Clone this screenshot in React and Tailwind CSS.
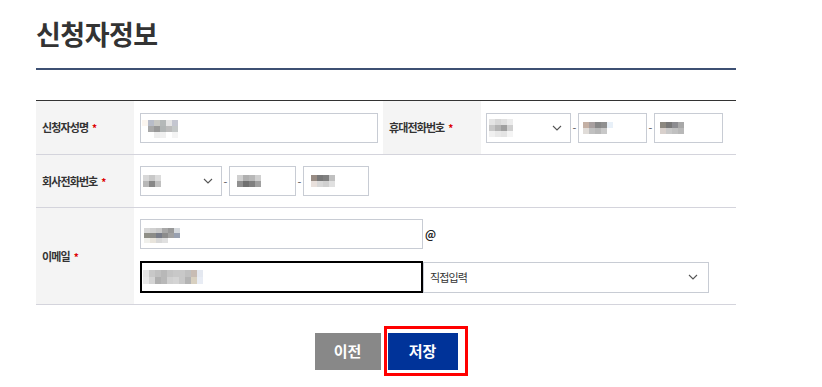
import React from "react";

const FONT = { fontFamily: '"Noto Sans CJK KR", "Noto Sans", sans-serif' };

function Mosaic({ rows, h = 6, w = 6 }) {
  return (
    <div className="flex flex-col">
      {rows.map((r, i) => (
        <div key={i} className="flex">
          {r.map((c, j) => (
            <div key={j} style={{ background: c, width: w, height: h }} />
          ))}
        </div>
      ))}
    </div>
  );
}

function Chevron() {
  return (
    <svg width="10" height="6" viewBox="0 0 10 6" className="shrink-0">
      <path d="M1 1 L5 5 L9 1" fill="none" stroke="#555" strokeWidth="1.1" />
    </svg>
  );
}

function Label({ children }) {
  return (
    <div className="w-[98px] shrink-0 bg-[#f4f4f4] flex items-center pl-[6px] text-[11px] font-bold text-[#333] tracking-[-0.9px]">
      {children}
      <span className="text-[#d00] ml-[4px] text-[10px]">*</span>
    </div>
  );
}

const Dash = () => <span className="text-[#555] text-[11px] w-[7px] text-center">-</span>;

export default function App() {
  return (
    <div style={FONT} className="w-[822px] h-[387px] bg-white pl-[36px] pt-[14px] relative">
      <div className="w-[700px]">
        <h1 className="text-[27px] font-bold text-[#333] leading-[40px] tracking-[-0.5px]">신청자정보</h1>
        <div className="mt-[14px] h-[2px] bg-[#3d5073]" />
        <div className="mt-[30px] border-t border-[#333]">
          {/* Row 1 */}
          <div className="flex h-[54px] border-b border-[#d4d4dc]">
            <Label>신청자성명</Label>
            <div className="w-[249px] flex items-center pl-[6px]">
              <div className="w-[238px] h-[30px] border border-[#c8ccd4] flex items-center pl-[1px] pt-[2px]">
                <Mosaic rows={[
                  ['#fbf5ef','#b8bcc8','#c8c8c4','#b4b8b8','#e4e4e4','#c4c6d0'],
                  ['#ffffff','#a8a8a8','#989898','#b0b4b4','#bcbcbc','#c4c8c8'],
                  ['#ffffff','#ffffff','#eeeeee','#f0f0f0','#ffffff','#f4f4f4'],
                ]} />
              </div>
            </div>
            <Label>휴대전화번호</Label>
            <div className="flex-1 flex items-center pl-[5px]">
              <div className="w-[85px] h-[30px] border border-[#c8ccd4] flex items-center justify-between pl-[2px] pr-[8px]">
                <Mosaic rows={[
                  ['#e4e4e4','#d8d8d8','#e0e0e0','#ececec'],
                  ['#c8c8c8','#b4b4b4','#a0a0a0','#d0d0d0'],
                  ['#f0f0f0','#e8e8e8','#e4e4e4','#f4f4f4'],
                ]} />
                <Chevron />
              </div>
              <Dash />
              <div className="w-[69px] h-[30px] border border-[#c8ccd4] flex items-center pl-[4px]">
                <Mosaic rows={[
                  ['#c4b0a4','#a8a0a0','#888888','#909090','#e8f0f8'],
                  ['#e0dcd8','#c0c0c0','#b8b8b8','#c8c8c8','#ffffff'],
                ]} />
              </div>
              <Dash />
              <div className="w-[69px] h-[30px] border border-[#c8ccd4] flex items-center pl-[5px]">
                <Mosaic rows={[
                  ['#8c8880','#787878','#8c8c90','#a8a8a8'],
                  ['#d8d0cc','#c8c8c8','#c0c0c0','#b8b8b8'],
                ]} />
              </div>
            </div>
          </div>
          {/* Row 2 */}
          <div className="flex h-[53px] border-b border-[#d4d4dc]">
            <Label>회사전화번호</Label>
            <div className="flex-1 flex items-center pl-[6px]">
              <div className="w-[82px] h-[30px] border border-[#c8ccd4] flex items-center justify-between pl-[2px] pr-[8px]">
                <Mosaic rows={[
                  ['#d8d8d8','#c8c8c8','#dcdcdc'],
                  ['#b8b8b8','#888888','#c0c0c0'],
                ]} />
                <Chevron />
              </div>
              <Dash />
              <div className="w-[67px] h-[30px] border border-[#c8ccd4] flex items-center pl-[7px]">
                <Mosaic rows={[
                  ['#d0d0d0','#b0b0b0','#b8b8b8','#d0d0d0'],
                  ['#909090','#707070','#808080','#a0a0a0'],
                ]} />
              </div>
              <Dash />
              <div className="w-[66px] h-[30px] border border-[#c8ccd4] flex items-center pl-[7px]">
                <Mosaic rows={[
                  ['#988c84','#787878','#808080','#c0c0c0'],
                  ['#e8e0dc','#d8d8d8','#d0d0d0','#e0e0e0'],
                ]} />
              </div>
            </div>
          </div>
          {/* Row 3 */}
          <div className="flex h-[97px] border-b border-[#d4d4dc]">
            <Label>이메일</Label>
            <div className="flex-1 flex flex-col pl-[6px] pt-[11px]">
              <div className="flex items-center">
                <div className="w-[283px] h-[30px] border border-[#c8ccd4] flex items-center pl-[3px] pt-[2px]">
                  <Mosaic h={5} rows={[
                    ['#d8d8d8','#d0d0d0','#c8c8c8','#a8a8a8','#989898','#d4d8dc'],
                    ['#909088','#8c8c88','#787c88','#8c8c8c','#a0a0a0','#98a0b0'],
                    ['#f0f0ec','#e8e4dc','#d8d8d8','#e0e0e0','#ffffff','#ffffff'],
                  ]} />
                </div>
                <span className="ml-[2px] text-[11px] font-bold text-[#222]">@</span>
              </div>
              <div className="flex items-center mt-[12px]">
                <div className="w-[283px] h-[32px] border-2 border-black flex items-center pl-[1px]">
                  <Mosaic h={7} rows={[
                    ['#e4e4e4','#c8c8c8','#c0c0c0','#b8b8b8','#c4c4c4','#c8c8c8','#c8c8c8','#c0c0c0','#c8bcb4','#e4e8f0'],
                    ['#e8e8e8','#d4d4d4','#b0b0b0','#b8b8b8','#d0d0d0','#d4d4d4','#c8c8c8','#b4b4b4','#d8d0c0','#e8ecf4'],
                  ]} />
                </div>
                <div className="w-[286px] h-[31px] border border-[#c8ccd4] flex items-center justify-between pl-[6px] pr-[10px] text-[11px] text-[#333] tracking-[-0.9px]">
                  <span>직접입력</span>
                  <Chevron />
                </div>
              </div>
            </div>
          </div>
        </div>
        <div className="mt-[28px] flex justify-center gap-[7px]">
          <button className="w-[66px] h-[37px] bg-[#888888] text-white text-[15px] font-bold">이전</button>
          <div className="relative">
            <button className="w-[70px] h-[37px] bg-[#003399] text-white text-[15px] font-bold">저장</button>
            <div className="absolute left-[-4px] top-[-7px] w-[84px] h-[50px] border-[3px] border-[#ff0000] pointer-events-none" />
          </div>
        </div>
      </div>
    </div>
  );
}
